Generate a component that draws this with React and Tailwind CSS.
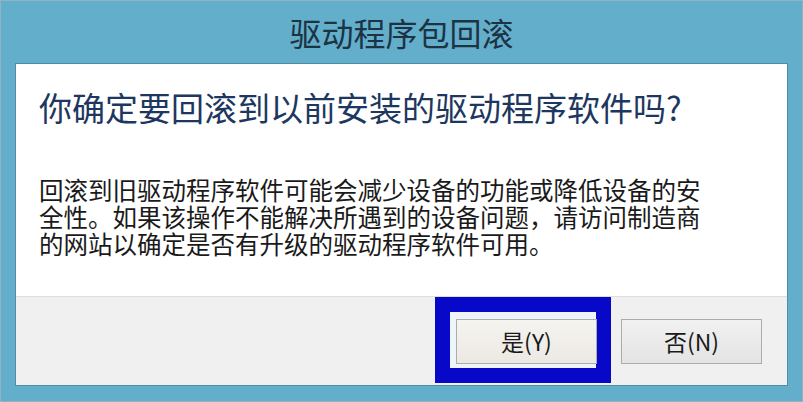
const font = { fontFamily: '"Noto Sans CJK SC", "Noto Sans", sans-serif' };

function Button({ label, focused = false }) {
  return (
    <button
      className={
        "h-[45px] w-[141px] border border-[#acacac] text-[23px] leading-none text-[#1a1a1a] " +
        (focused
          ? "bg-gradient-to-b from-[#f6f4f0] to-[#ece9e3]"
          : "bg-gradient-to-b from-[#f1f1f1] to-[#e4e4e4]")
      }
    >
      {label}
    </button>
  );
}

export default function App() {
  return (
    <div
      className="w-[803px] h-[402px] bg-[#63aecb] border border-[#8fb5c4] flex flex-col overflow-hidden"
      style={font}
    >
      {/* title bar */}
      <div className="h-[62px] flex items-center justify-center text-[32px] text-[#1c3344]">
        驱动程序包回滚
      </div>

      {/* dialog body */}
      <div className="mx-[14px] mb-[15px] flex-1 flex flex-col border border-[#4f8ca6]">
        <div className="flex-1 bg-white pl-[23px] pt-[23px]">
          <h1 className="text-[33px] leading-[40px] text-[#1d3760] whitespace-nowrap">
            你确定要回滚到以前安装的驱动程序软件吗?
          </h1>
          <p className="mt-[49px] text-[24.5px] leading-[27px] text-[#1a1a1a] whitespace-nowrap">
            回滚到旧驱动程序软件可能会减少设备的功能或降低设备的安
            <br />
            全性。如果该操作不能解决所遇到的设备问题，请访问制造商
            <br />
            的网站以确定是否有升级的驱动程序软件可用。
          </p>
        </div>

        <div className="h-[89px] bg-[#f0f0f0] border-t border-[#dedede] flex items-center justify-end gap-[24px] pr-[25px]">
          <div className="relative">
            {/* annotation frame */}
            <div className="absolute -left-[21px] -top-[22px] -right-[14px] -bottom-[19px] border-[15px] border-[#0808c8] bg-[#edf4fa]" />
            <div className="relative">
              <Button label="是(Y)" focused />
            </div>
          </div>
          <Button label="否(N)" />
        </div>
      </div>
    </div>
  );
}
